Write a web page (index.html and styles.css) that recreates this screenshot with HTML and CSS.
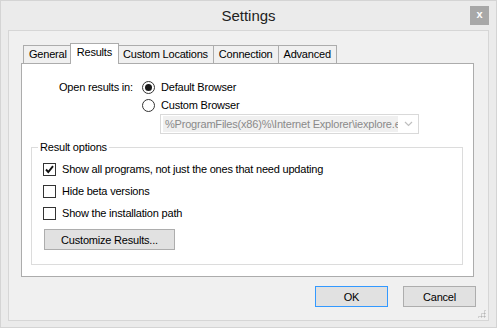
FILE: index.html
```html
<!DOCTYPE html>
<html lang="en">
<head>
  <meta charset="UTF-8" />
  <title>Settings</title>
  <link rel="stylesheet" href="styles.css">
</head>
<body>
  <div class="window">
    <div class="titlebar">
      <span class="title-spacer"></span>
      <span class="title">Settings</span>
      <span class="close-btn">x</span>
    </div>

    <div class="client">
      <div class="tabs">
        <span class="tab">General</span>
        <span class="tab active">Results</span>
        <span class="tab">Custom Locations</span>
        <span class="tab">Connection</span>
        <span class="tab">Advanced</span>
      </div>

      <div class="panel">
        <div class="open-in">
          <span class="open-label">Open results in:</span>
          <div class="open-choices">
            <label class="radio-row"><span class="radio checked"></span>Default Browser</label>
            <label class="radio-row"><span class="radio"></span>Custom Browser</label>
            <div class="combo">
              <span class="combo-text">%ProgramFiles(x86)%\Internet Explorer\iexplore.exe</span>
              <svg class="combo-arrow" width="9" height="6" viewBox="0 0 9 6"><path d="M1 1 L4.5 4.5 L8 1" fill="none" stroke="#bfbfbf" stroke-width="1.2"/></svg>
            </div>
          </div>
        </div>

        <fieldset class="group">
          <legend>Result options</legend>
          <label class="check-row"><span class="check checked"><svg width="11" height="11" viewBox="0 0 11 11"><path d="M2 5.5 L4.3 8 L9 2.2" fill="none" stroke="#111" stroke-width="1.9"/></svg></span>Show all programs, not just the ones that need updating</label>
          <label class="check-row"><span class="check"></span>Hide beta versions</label>
          <label class="check-row"><span class="check"></span>Show the installation path</label>
          <button class="btn customize">Customize Results...</button>
        </fieldset>
      </div>

      <div class="footer">
        <button class="btn default">OK</button>
        <button class="btn">Cancel</button>
      </div>
      <span class="grip"></span>
    </div>
  </div>
</body>
</html>
```

FILE: styles.css
```css
* {
  margin: 0;
  padding: 0;
  box-sizing: border-box;
}
html, body {
  width: 100%;
  height: 100%;
  background: #ebebeb;
  font-family: 'Liberation Sans', Arial, sans-serif;
  font-size: 11px;
  letter-spacing: -0.2px;
  color: #000;
}

.window {
  width: 497px;
  height: 328px;
  border: 1px solid #d4d4d4;
  background: #ebebeb;
  display: flex;
  flex-direction: column;
}

.titlebar {
  height: 29px;
  display: grid;
  grid-template-columns: 1fr auto 1fr;
  align-items: start;
}
.title {
  font-size: 15px;
  letter-spacing: 0;
  color: #222;
  padding-top: 6px;
}
.close-btn {
  justify-self: end;
  width: 19px;
  height: 19px;
  margin-top: 5px;
  margin-right: 7px;
  background: #a8a8a8;
  color: #fff;
  font-size: 11px;
  font-weight: bold;
  line-height: 17px;
  text-align: center;
}

.client {
  margin: 0 7px;
  height: 291px;
  border: 1px solid #d6d6d6;
  background: #f0f0f0;
  display: flex;
  flex-direction: column;
  position: relative;
}

.tabs {
  display: flex;
  align-items: flex-end;
  padding-left: 14px;
  margin-top: 12px;
  height: 21px;
  position: relative;
  z-index: 1;
}
.tab {
  height: 18px;
  margin-bottom: 1px;
  padding: 0 5px;
  border: 1px solid #acacac;
  border-bottom: none;
  margin-right: -1px;
  background: #f0f0f0;
  line-height: 17px;
}
.tab.active {
  height: 21px;
  margin: 0 -1px 0 -2px;
  padding: 0 6px;
  background: #fff;
  position: relative;
  z-index: 2;
  line-height: 16px;
}
.tab.active + .tab {
  margin-left: -1px;
}

.panel {
  margin: -1px 14px 0 12px;
  height: 214px;
  border: 1px solid #acacac;
  background: #fff;
  padding: 14px 10px 0 9px;
  display: flex;
  flex-direction: column;
}

.open-in {
  display: flex;
  padding-left: 28px;
}
.open-label {
  width: 83px;
  white-space: nowrap;
  line-height: 18px;
}
.open-choices {
  display: flex;
  flex-direction: column;
}
.radio-row {
  display: flex;
  align-items: center;
  gap: 6px;
  height: 18px;
}
.radio {
  width: 13px;
  height: 13px;
  border-radius: 50%;
  border: 1px solid #333;
  background: #fff;
  display: flex;
  align-items: center;
  justify-content: center;
}
.radio.checked::after {
  content: '';
  width: 7px;
  height: 7px;
  border-radius: 50%;
  background: #1a1a1a;
}
.combo {
  margin-left: 18px;
  width: 259px;
  height: 20px;
  border: 1px solid #d9d9d9;
  background: #fff;
  display: flex;
  align-items: center;
}
.combo-text {
  flex: 1;
  height: 16px;
  margin-left: 2px;
  padding-left: 2px;
  background: #f0f0f0;
  color: #8a8a8a;
  white-space: nowrap;
  overflow: hidden;
  line-height: 16px;
}
.combo-arrow {
  margin: 0 5px 0 6px;
}

.group {
  margin-top: 6px;
  border: 1px solid #dcdcdc;
  height: 125px;
  padding: 4px 0 0 11px;
  display: flex;
  flex-direction: column;
}
.group legend {
  margin-left: -5px;
  padding: 0 2px;
  line-height: 14px;
}
.check-row {
  display: flex;
  align-items: center;
  gap: 6px;
  height: 22px;
}
.check {
  width: 13px;
  height: 13px;
  border: 1px solid #333;
  background: #fff;
  display: flex;
  align-items: center;
  justify-content: center;
}

.btn {
  font: inherit;
  letter-spacing: inherit;
  color: #000;
  background: #e1e1e1;
  border: 1px solid #adadad;
  height: 21px;
}
.customize {
  margin: 5px 0 0 1px;
  width: 131px;
}

.footer {
  display: flex;
  justify-content: flex-end;
  gap: 15px;
  margin: 9px 12px 0 0;
}
.footer .btn {
  width: 73px;
  height: 21px;
}
.btn.default {
  border-color: #3399ff;
}

.grip {
  position: absolute;
  right: 2px;
  bottom: 2px;
  width: 9px;
  height: 9px;
  background:
    radial-gradient(circle, #b5b5b5 45%, transparent 50%) 0 0 / 3px 3px;
  clip-path: polygon(100% 0, 100% 100%, 0 100%);
}
```
